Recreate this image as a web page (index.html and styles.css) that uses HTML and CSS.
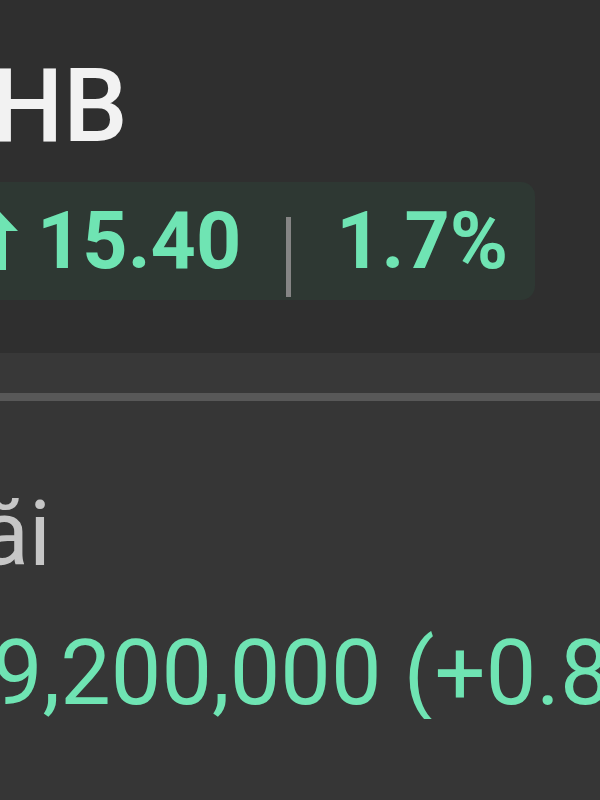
FILE: index.html
```html
<!DOCTYPE html>
<html>
<head>
<meta name="viewport" content="width=device-width, initial-scale=1">
<link rel="stylesheet" href="styles.css">
</head>
<body>

  <div class="quote">
    <h1 class="symbol">HB</h1>

    <div class="change">
      <svg class="arrow" width="40" height="60" viewBox="0 0 40 60">
        <path d="M20 0 L38 19 L26 19 L26 58 L14 58 L14 19 L2 19 Z" fill="#6fe4b3"/>
      </svg>
      <span class="amount">15.40</span>
      <span class="sep"></span>
      <span class="amount">1.7%</span>
    </div>
  </div>

  <div class="band"></div>
  <hr class="divider">

  <div class="stat">
    <div class="stat-label">ăi</div>
    <div class="stat-value">9,200,000 (+0.8%)</div>
  </div>

</body>
</html>
```

FILE: styles.css
```css
body {
  margin: 0;
  font-family: Roboto, "Noto Sans", Arial, sans-serif;
  background-color: #363636;
  overflow: hidden;
}

/* Top block with symbol and change badge */
.quote {
  background-color: #2f2f2f;
  height: 353px;
  padding-top: 56px;
  box-sizing: border-box;
}

.symbol {
  margin: 0 0 0 -9px;
  font-size: 102px;
  line-height: 100px;
  font-weight: 500;
  color: #f2f2f2;
}

.change {
  display: inline-flex;
  align-items: center;
  margin-top: 26px;
  margin-left: -40px;
  height: 118px;
  padding: 0 27px 0 20px;
  background-color: #2e3833;
  border-radius: 14px;
  color: #6fe4b3;
}

.arrow {
  flex: none;
  margin-right: 17px;
  margin-top: 2px;
}

.amount {
  font-size: 79px;
  line-height: 79px;
  font-weight: 700;
}

.sep {
  width: 5px;
  height: 80px;
  margin: 32px 45px 0 45px;
  background-color: #858585;
}

.band {
  height: 40px;
  background-color: #383838;
}

/* Overwrite default styles of hr */
.divider {
  margin: 0;
  height: 8px;
  border: none;
  background-color: #585858;
}

.stat {
  padding-top: 89px;
  white-space: nowrap;
}

.stat-label {
  margin-left: -20px;
  font-size: 90px;
  line-height: 90px;
  color: #c6c6c6;
}

.stat-value {
  margin-top: 49px;
  margin-left: -8px;
  font-size: 90px;
  line-height: 90px;
  color: #6fe4b3;
}
```
